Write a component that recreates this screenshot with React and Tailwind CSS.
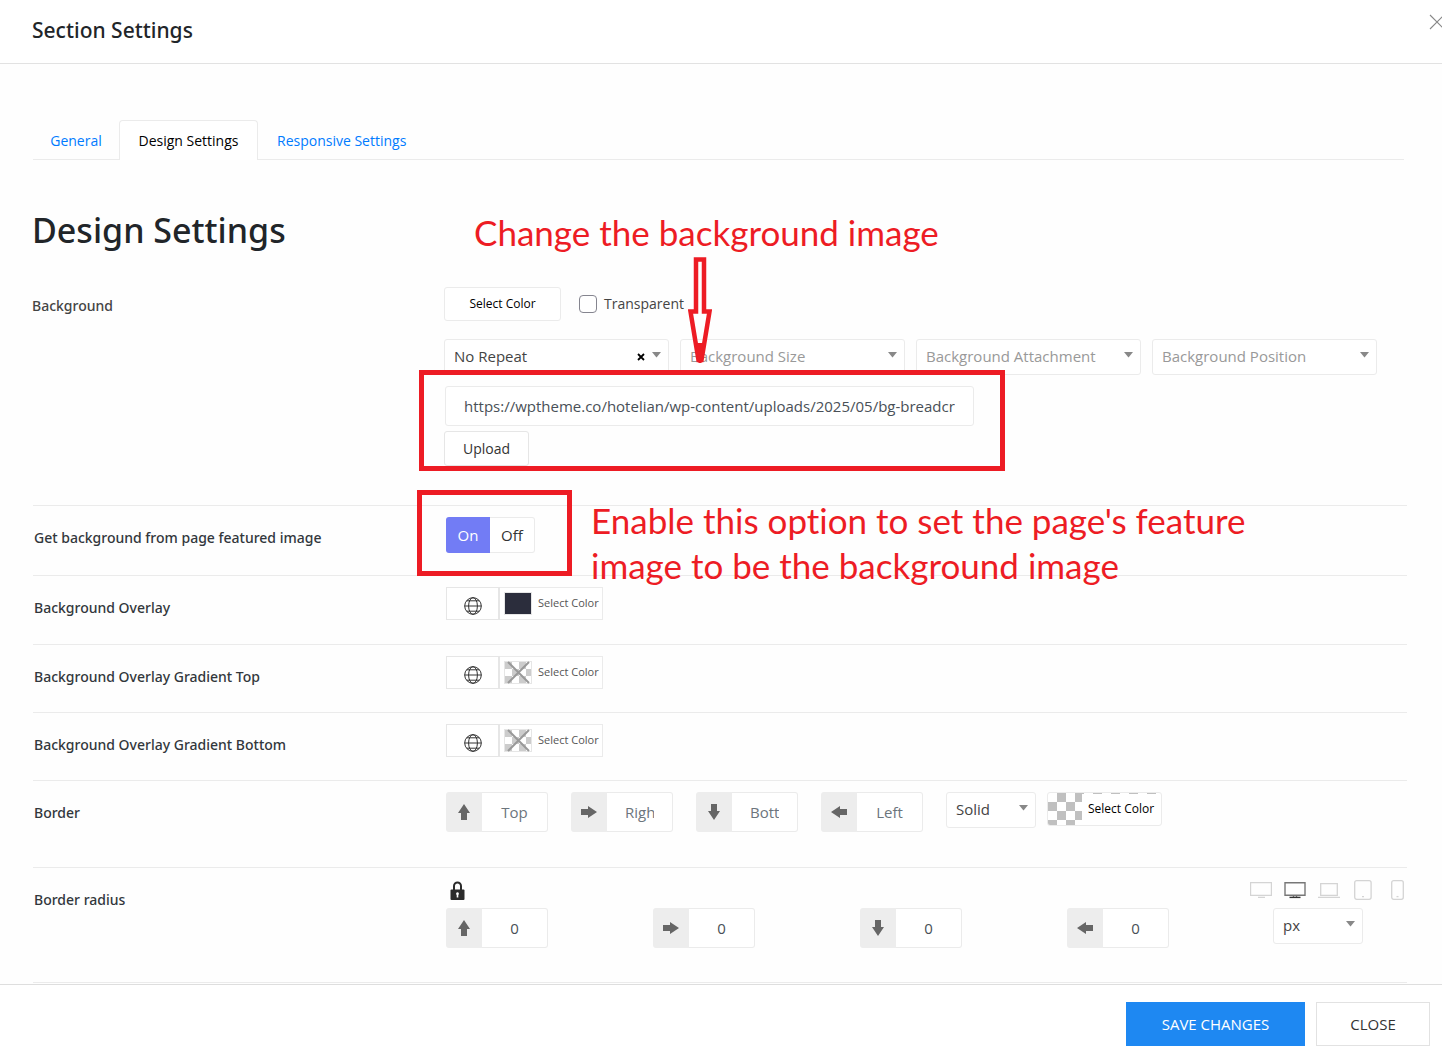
import React, { useState } from "react";

const RED = "#ed1c24";

function Caret() {
  return (
    <svg className="pointer-events-none absolute right-2 top-[13px] h-[6px] w-[9px]" viewBox="0 0 9 6" aria-hidden="true">
      <path d="M0 0h9L4.5 5.5z" fill="#888" />
    </svg>
  );
}

function SelectBox({ label, options, muted, clearable, className }) {
  return (
    <div className={`relative h-9 ${className || ""}`}>
      <select
        aria-label={label}
        className={`h-9 w-full appearance-none rounded-[3px] border border-[#ebebeb] bg-white pr-6 pb-[2px] pl-[9px] text-[15px] outline-none ${
          muted ? "text-[#999]" : "text-[#444]"
        }`}
      >
        {options.map((o) => (
          <option key={o}>{o}</option>
        ))}
      </select>
      {clearable && (
        <button type="button" aria-label={`Clear ${label}`} className="absolute top-[14px] right-6 h-2 w-2">
          <svg viewBox="0 0 8 8" className="h-2 w-2">
            <path d="M1 1l6 6M7 1L1 7" stroke="#000" strokeWidth="1.8" />
          </svg>
        </button>
      )}
      <Caret />
    </div>
  );
}

const rotations = { up: "", right: "rotate-90", down: "rotate-180", left: "-rotate-90" };

function SideInput({ dir, label, value }) {
  return (
    <label className="flex h-10 w-[102px] shrink-0">
      <span className="flex w-9 shrink-0 items-center justify-center rounded-l-[3px] bg-[#ededed]">
        <svg viewBox="0 0 14 16" className={`h-4 w-[14px] ${rotations[dir]}`} aria-hidden="true">
          <path d="M7 0l6 9H10v7H4V9H1z" fill="#666" />
        </svg>
      </span>
      <input
        type="text"
        aria-label={label}
        placeholder={value === undefined ? label : undefined}
        defaultValue={value}
        className="h-10 w-full min-w-0 rounded-r-[3px] border border-l-0 border-[#ebebeb] bg-white px-[18px] text-center text-[15px] text-[#495057] outline-none placeholder:text-[#6c757d]"
      />
    </label>
  );
}

function Row({ label, height, children }) {
  return (
    <div className={`mr-[35px] ml-[33px] flex border-b border-[#ebebeb] ${height}`}>
      <div className="w-[413px] shrink-0 pt-5 pl-px font-['Noto_Sans','Open_Sans',sans-serif] text-sm leading-6 font-medium text-[#32373c]">{label}</div>
      <div className="min-w-0 flex-1 pt-[11px]">{children}</div>
    </div>
  );
}

function Globe() {
  return (
    <svg viewBox="0 0 18 18" className="mt-1 h-[18px] w-[18px]" fill="none" stroke="#333" strokeWidth="1" aria-hidden="true">
      <circle cx="9" cy="9" r="8.3" />
      <ellipse cx="9" cy="9" rx="4.4" ry="8.3" />
      <path d="M0.7 9h16.6M2.8 3.8h12.4M2.8 14.2h12.4" />
    </svg>
  );
}

function ColorPicker({ filled, name }) {
  return (
    <div className="flex h-[33px] w-[157px]">
      <button type="button" aria-label={`${name} global color`} className="flex w-[54px] items-center justify-center border border-r-2 border-[#e6e6e6] bg-white">
        <Globe />
      </button>
      <button type="button" className="flex flex-1 items-center gap-[6px] border border-l-0 border-[#ebebeb] bg-white pl-1 text-[11px] whitespace-nowrap text-[#555]">
        <svg viewBox="0 0 28 23" className="h-[23px] w-7 shrink-0" aria-hidden="true">
          <rect x="0.5" y="0.5" width="27" height="22" fill="#fff" stroke="#e6e6e6" />
          {filled ? (
            <rect x="1" y="1" width="26" height="21" fill="#2b2d3c" />
          ) : (
            <g>
              <path d="M1 1h7v7H1zM15 1h7v7h-7zM8 8h7v7H8zM22 8h5v7h-5zM1 15h7v7H1zM15 15h7v7h-7z" fill="#ccc" />
              <path d="M4 1l21 21M25 1L4 22" stroke="#999" strokeWidth="2" />
            </g>
          )}
        </svg>
        <span>Select Color</span>
      </button>
    </div>
  );
}

function Devices() {
  const light = "#d4d4d4";
  const cell = "flex w-[34px] justify-center";
  return (
    <div className="-ml-[6px] flex w-[170px] pt-px">
      <button type="button" aria-label="Wide screen" className={cell}>
        <svg viewBox="0 0 22 20" className="h-5 w-[22px]" fill="none" stroke={light} strokeWidth="1.2">
          <path d="M0.6 2.6h20.8v12.8H0.6zM8 17.4h7" />
        </svg>
      </button>
      <button type="button" aria-label="Desktop" className={cell}>
        <svg viewBox="0 0 22 20" className="h-5 w-[22px]" fill="none" stroke="#777" strokeWidth="1.4">
          <path d="M1 2.7h20v12.6H1zM9.5 15v2M12.5 15v2" />
          <path d="M5.5 17.4h11" stroke="#333" />
        </svg>
      </button>
      <button type="button" aria-label="Laptop" className={cell}>
        <svg viewBox="0 0 22 20" className="h-5 w-[22px]" fill="none" stroke={light} strokeWidth="1.3">
          <path d="M2.7 3.7h16.6v11.6H2.7zM0 17.4h22" />
        </svg>
      </button>
      <button type="button" aria-label="Tablet" className={cell}>
        <svg viewBox="0 0 18 20" className="h-5 w-[18px]" fill="none" stroke={light} strokeWidth="1.3">
          <rect x="0.7" y="0.7" width="16.4" height="18.6" rx="2" />
          <path d="M8 16.6h2" />
        </svg>
      </button>
      <button type="button" aria-label="Phone" className={cell}>
        <svg viewBox="0 0 13 20" className="h-5 w-[13px]" fill="none" stroke={light} strokeWidth="1.3">
          <rect x="0.7" y="0.7" width="11.6" height="18.6" rx="2" />
          <path d="M5.5 16.6h2" />
        </svg>
      </button>
    </div>
  );
}

export default function App() {
  const [on, setOn] = useState(true);
  const seg = "h-9 text-[15px]";
  return (
    <div className="flex min-h-screen flex-col bg-white font-['Open_Sans','Noto_Sans',sans-serif] text-[#212529]">
      <header className="flex h-16 items-center justify-between border-b border-[#e2e2e2] pl-8">
        <h2 className="mb-[2px] font-['Noto_Sans','Open_Sans',sans-serif] text-[21px] font-medium">Section Settings</h2>
        <button type="button" aria-label="Close" className="mb-5 h-4 w-[13px] overflow-hidden">
          <svg viewBox="0 0 16 16" className="h-4 w-4" fill="none" stroke="#888" strokeWidth="1.1">
            <path d="M1 1l14 14M15 1L1 15" />
          </svg>
        </button>
      </header>

      <main className="flex-1 bg-[#fefefe] pt-14">
        <nav className="mr-[38px] ml-[33px] flex h-10 border-b border-[#ebebeb] text-sm text-[#007bff]">
          <a href="#general" className="flex w-[86px] items-center justify-center pt-[2px]">General</a>
          <a href="#design" className="-mb-px flex w-[139px] items-center justify-center rounded-t-[4px] border border-b-0 border-[#ebebeb] bg-white text-black">
            Design Settings
          </a>
          <a href="#responsive" className="flex items-center px-[19px] pt-[2px]">Responsive Settings</a>
        </nav>

        <h1 className="mt-[46px] ml-8 font-['Noto_Sans','Open_Sans',sans-serif] text-[34px] leading-[48px] font-medium">Design Settings</h1>

        <section className="relative mr-[35px] ml-[33px] flex border-b border-[#ebebeb] pt-[33px] pb-[39px]">
          <div className="-ml-px w-[412px] shrink-0 pt-[7px] font-['Noto_Sans','Open_Sans',sans-serif] text-sm leading-6 font-medium text-[#444]">Background</div>
          <div className="min-w-0 flex-1 pr-[30px]">
            <div className="flex h-[34px] items-center">
              <button type="button" className="h-[34px] w-[117px] rounded-[3px] border border-[#ebebeb] bg-white text-xs text-black">
                Select Color
              </button>
              <label className="ml-[18px] flex items-center gap-[7px] text-sm text-[#444]">
                <input type="checkbox" className="h-[18px] w-[18px] appearance-none rounded-[4px] border border-[#85858f] bg-white" />
                Transparent
              </label>
            </div>
            <div className="mt-[18px] grid grid-cols-4 gap-[11px]">
              <SelectBox label="Background Repeat" options={["No Repeat", "Repeat"]} clearable />
              <SelectBox label="Background Size" options={["Background Size", "Cover"]} muted />
              <SelectBox label="Background Attachment" options={["Background Attachment", "Fixed"]} muted />
              <SelectBox label="Background Position" options={["Background Position", "Center"]} muted />
            </div>
            <div className="relative mt-[11px] h-20 w-[530px]">
              <input
                type="text"
                aria-label="Background image URL"
                defaultValue="https://wptheme.co/hotelian/wp-content/uploads/2025/05/bg-breadcrumb.jpg"
                className="ml-px block h-10 w-[529px] rounded-[3px] border border-[#ebebeb] bg-white px-[18px] text-[15px] text-[#495057] outline-none"
              />
              <button type="button" className="mt-[5px] block h-[35px] w-[85px] rounded-[3px] border border-[#e6e6e6] bg-white text-sm text-[#333]">
                Upload
              </button>
              <div className="pointer-events-none absolute -top-4 -right-[31px] -bottom-[5px] -left-[25px] border-[5px] border-[#ed1c24]" />
            </div>
          </div>
          <p className="absolute top-[-44px] left-[441px] font-['Lato',sans-serif] text-[35px] leading-[44px] whitespace-nowrap text-[#ed1c24] [font-variant-ligatures:none]">
            Change the background image
          </p>
          <svg className="pointer-events-none absolute top-[3px] left-[655px] h-[108px] w-6" viewBox="0 0 24 108" aria-hidden="true">
            <path d="M8 2.500h8v52h5.500L13.500 103h-3L2.500 54.500H8z" fill="none" stroke={RED} strokeWidth="4.500" />
            <path d="M8 86h8l-2.500 20h-3z" fill={RED} />
          </svg>
        </section>

        <Row label="Get background from page featured image" height="h-[70px]">
          <div className="relative flex h-9 w-[89px]">
            <button type="button" aria-pressed={on} onClick={() => setOn(true)} className={`${seg} w-11 rounded-l-[3px] ${on ? "bg-[#727cf5] text-white" : "border border-[#ebebeb] text-[#333]"}`}>
              On
            </button>
            <button type="button" aria-pressed={!on} onClick={() => setOn(false)} className={`${seg} w-[45px] rounded-r-[3px] ${on ? "border border-l-0 border-[#ebebeb] bg-white text-[#333]" : "bg-[#727cf5] text-white"}`}>
              Off
            </button>
            <div className="pointer-events-none absolute -top-[27px] -right-[37px] -bottom-[23px] -left-[29px] border-[5px] border-[#ed1c24]" />
            <p className="absolute top-[-19px] left-[145px] font-['Lato',sans-serif] text-[35px] leading-[45px] whitespace-nowrap text-[#ed1c24] [font-variant-ligatures:none]">
              Enable this option to set the page's feature
              <br />
              image to be the background image
            </p>
          </div>
        </Row>
        <Row label="Background Overlay" height="h-[69px]">
          <ColorPicker filled name="Overlay" />
        </Row>
        <Row label="Background Overlay Gradient Top" height="h-[68px]">
          <ColorPicker name="Gradient top" />
        </Row>
        <Row label="Background Overlay Gradient Bottom" height="h-[68px]">
          <ColorPicker name="Gradient bottom" />
        </Row>
        <Row label="Border" height="h-[87px]">
          <div className="flex gap-[23px]">
            <SideInput dir="up" label="Top" />
            <SideInput dir="right" label="Right" />
            <SideInput dir="down" label="Bottom" />
            <SideInput dir="left" label="Left" />
            <div className="flex gap-[11px]">
              <SelectBox label="Border style" options={["Solid", "Dashed"]} className="w-[90px]" />
              <button type="button" className="relative flex h-[34px] w-[115px] items-center overflow-hidden rounded-[3px] border border-[#ebebeb] bg-white text-xs text-black">
                <svg viewBox="0 0 113 32" className="absolute inset-0 h-8 w-[113px]" aria-hidden="true">
                  <path d="M9 0h9v9H9zM27 0h7v9h-7zM0 9h9v9H0zM18 9h9v9h-9zM9 18h9v9H9zM27 18h7v9h-7zM0 27h9v5H0zM18 27h9v5h-9z" fill="#c0c0c0" />
                  <path d="M34 0.500h2M45 0.500h9M63 0.500h9M81 0.500h9M99 0.500h9" stroke="#c0c0c0" />
                </svg>
                <span className="pl-10 whitespace-nowrap">Select Color</span>
              </button>
            </div>
          </div>
        </Row>
        <Row label="Border radius" height="h-[115px]">
          <div className="flex">
            <div className="flex-1">
              <button type="button" aria-label="Link values" className="ml-1 block h-[22px] w-[15px]">
                <svg viewBox="0 0 15 19" className="h-[19px] w-[15px]" aria-hidden="true">
                  <path d="M4 9V5a3.500 3.500 0 0 1 7 0v4" fill="none" stroke="#2b2b2b" strokeWidth="2" />
                  <rect x="0.500" y="8.500" width="14" height="10.500" rx="1" fill="#2b2b2b" />
                  <path d="M7.500 11.200a1.500 1.500 0 0 1 .8 2.700v2.600H6.700v-2.600a1.500 1.500 0 0 1 .8-2.700z" fill="#fff" />
                </svg>
              </button>
              <div className="mt-[7px] flex gap-[105px]">
                <SideInput dir="up" label="Top radius" value="0" />
                <SideInput dir="right" label="Right radius" value="0" />
                <SideInput dir="down" label="Bottom radius" value="0" />
                <SideInput dir="left" label="Left radius" value="0" />
              </div>
            </div>
            <div className="w-[157px] pr-[3px]">
              <Devices />
              <SelectBox label="Unit" options={["px", "%"]} className="mt-2 ml-[23px] w-[90px]" />
            </div>
          </div>
        </Row>
      </main>

      <footer className="flex justify-end gap-[11px] border-t border-[#dedede] bg-white pt-[17px] pr-3 pb-4 text-[15px]">
        <button type="button" className="h-11 w-[179px] bg-[#1e88f2] text-white">SAVE CHANGES</button>
        <button type="button" className="h-11 w-[114px] border border-[#e2e2e2] bg-white text-[#333]">CLOSE</button>
      </footer>
    </div>
  );
}
